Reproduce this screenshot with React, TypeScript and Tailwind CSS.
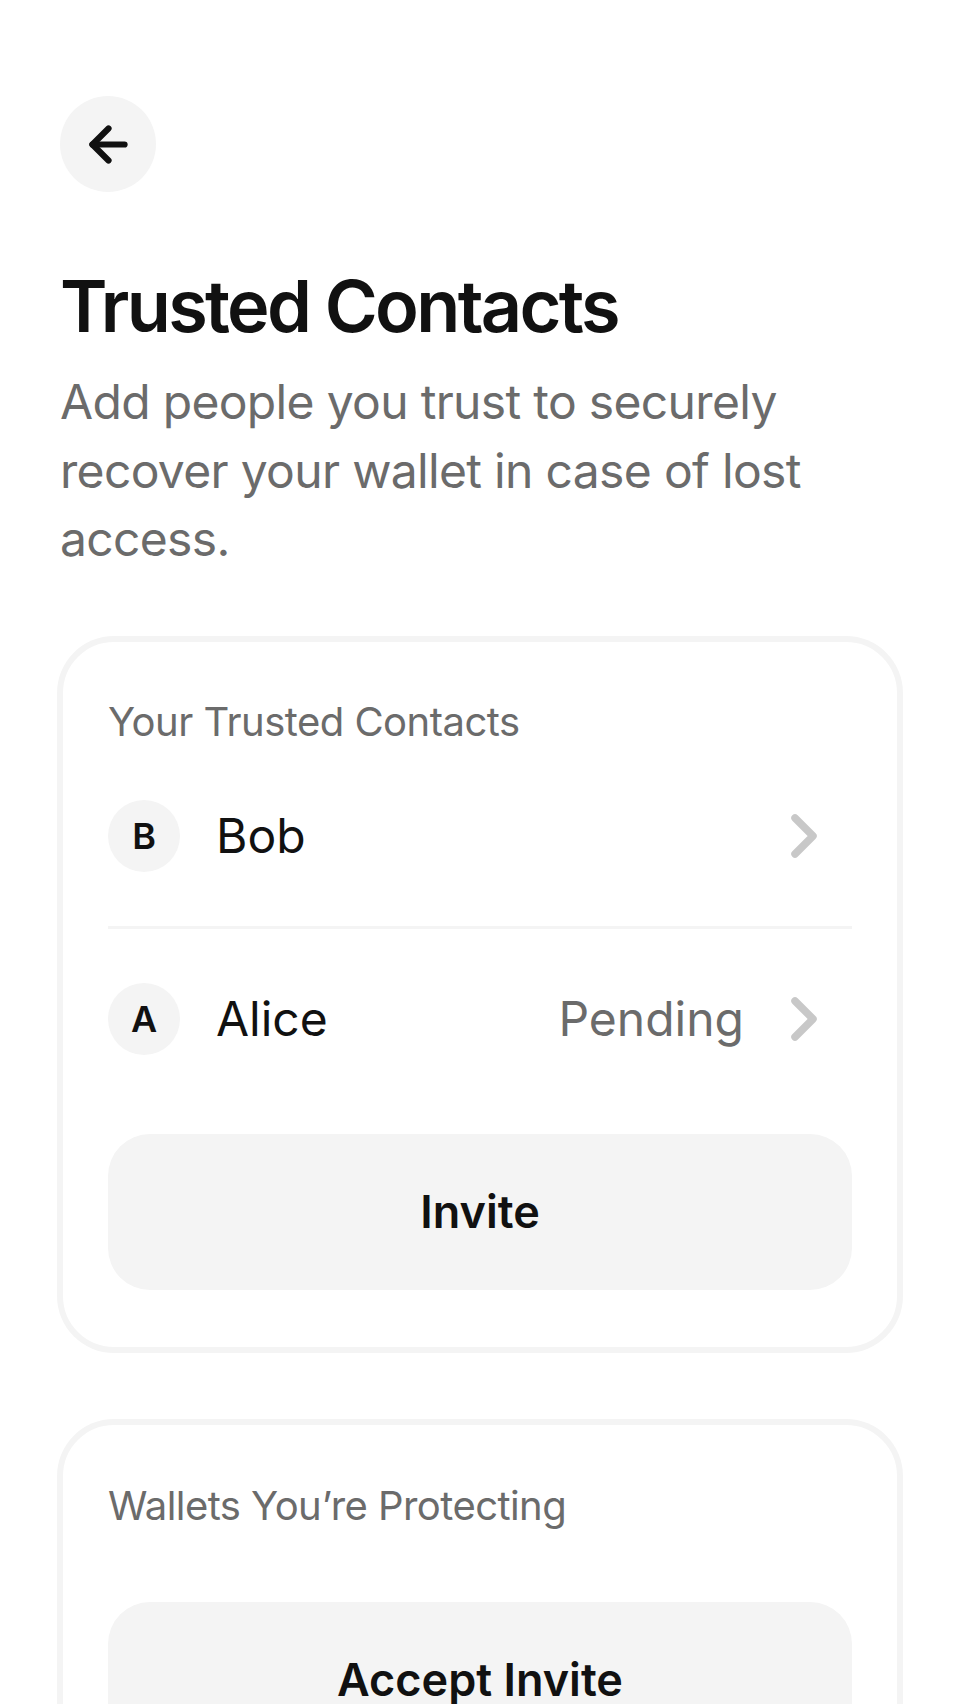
import React from "react";
import { ArrowLeft, ChevronRight } from "lucide-react";

function Avatar({ letter }: { letter: string }) {
  return (
    <div className="w-[72px] h-[72px] shrink-0 rounded-full bg-[#f4f4f4] flex items-center justify-center text-[36px] font-semibold text-[#111]">
      {letter}
    </div>
  );
}

function ContactRow({ letter, name, status }: { letter: string; name: string; status?: string }) {
  return (
    <div className="flex items-center py-[54px] pr-[12px]">
      <Avatar letter={letter} />
      <div className="ml-[36px] flex-1 text-[48px] leading-[58px] text-[#111]">{name}</div>
      {status && <div className="text-[48px] leading-[58px] text-[#6b6b6b] mr-[24px]">{status}</div>}
      <ChevronRight size={72} strokeWidth={2.5} color="#c8c8c8" />
    </div>
  );
}

export default function App() {
  return (
    <div className="min-h-screen bg-white font-['Inter','Noto_Sans',sans-serif] px-[60px] pt-[96px] pb-[60px]">
      <button className="w-[96px] h-[96px] rounded-full bg-[#f4f4f4] flex items-center justify-center">
        <ArrowLeft size={55} strokeWidth={2.7} color="#111" />
      </button>
      <h1 className="mt-[71px] text-[72px] leading-[86px] font-semibold tracking-[-0.037em] text-[#111]">
        Trusted Contacts
      </h1>
      <p className="mt-[19px] text-[48px] leading-[68.5px] tracking-[-0.014em] text-[#6b6b6b]">
        Add people you trust to securely recover your wallet in case of lost access.
      </p>

      <div className="mt-[65px] rounded-[54px] border-[3px] border-[#f4f4f4] ring-[3px] ring-[#f4f4f4] bg-white pt-[56px] px-[45px] pb-[57px]">
        <div className="text-[40px] leading-[48px] tracking-[-0.013em] text-[#6b6b6b]">Your Trusted Contacts</div>
        <ContactRow letter="B" name="Bob" />
        <div className="h-[3px] bg-[#f4f4f4]" />
        <ContactRow letter="A" name="Alice" status="Pending" />
        <button className="mt-[25px] w-full h-[156px] rounded-[42px] bg-[#f4f4f4] text-[45px] font-semibold text-[#111]">
          Invite
        </button>
      </div>

      <div className="mt-[72px] rounded-[54px] border-[3px] border-[#f4f4f4] ring-[3px] ring-[#f4f4f4] bg-white pt-[57px] px-[45px] pb-[57px]">
        <div className="text-[40px] leading-[48px] tracking-[-0.014em] text-[#6b6b6b]">Wallets You’re Protecting</div>
        <button className="mt-[72px] w-full h-[156px] rounded-[42px] bg-[#f4f4f4] text-[45px] font-semibold text-[#111]">
          Accept Invite
        </button>
      </div>
    </div>
  );
}
